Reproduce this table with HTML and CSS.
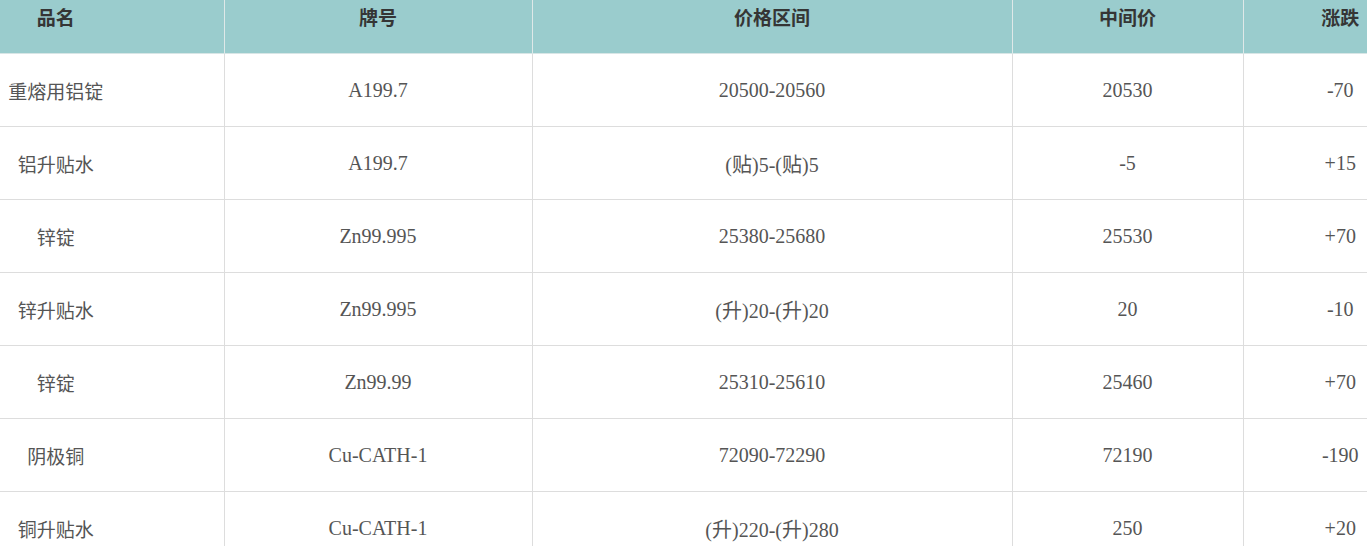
FILE: index.html
```html
<!DOCTYPE html>
<html lang="zh-CN">
<head>
<meta charset="utf-8">
<title>价格行情</title>
<link rel="stylesheet" href="styles.css">
</head>
<body>
<div class="wrap">
<table class="price-table">
  <colgroup>
    <col class="c-name">
    <col class="c-brand">
    <col class="c-range">
    <col class="c-mid">
    <col class="c-chg">
  </colgroup>
  <thead>
    <tr>
      <th class="name">品名</th>
      <th>牌号</th>
      <th>价格区间</th>
      <th>中间价</th>
      <th class="chg">涨跌</th>
    </tr>
  </thead>
  <tbody>
    <tr><td class="name">重熔用铝锭</td><td>A199.7</td><td>20500-20560</td><td>20530</td><td class="chg">-70</td></tr>
    <tr><td class="name">铝升贴水</td><td>A199.7</td><td>(贴)5-(贴)5</td><td>-5</td><td class="chg">+15</td></tr>
    <tr><td class="name">锌锭</td><td>Zn99.995</td><td>25380-25680</td><td>25530</td><td class="chg">+70</td></tr>
    <tr><td class="name">锌升贴水</td><td>Zn99.995</td><td>(升)20-(升)20</td><td>20</td><td class="chg">-10</td></tr>
    <tr><td class="name">锌锭</td><td>Zn99.99</td><td>25310-25610</td><td>25460</td><td class="chg">+70</td></tr>
    <tr><td class="name">阴极铜</td><td>Cu-CATH-1</td><td>72090-72290</td><td>72190</td><td class="chg">-190</td></tr>
    <tr><td class="name">铜升贴水</td><td>Cu-CATH-1</td><td>(升)220-(升)280</td><td>250</td><td class="chg">+20</td></tr>
  </tbody>
</table>
</div>
</body>
</html>
```

FILE: styles.css
```css
html, body {
  margin: 0;
  padding: 0;
  background: #ffffff;
}

.wrap {
  width: 1367px;
  overflow: hidden;
}

.price-table {
  border-collapse: collapse;
  table-layout: fixed;
  width: 1367px;
  font-family: "Liberation Serif", "Noto Sans CJK SC", serif;
  font-size: 20px;
  color: #555555;
}

.c-name { width: 224px; }
.c-brand { width: 308px; }
.c-range { width: 480px; }
.c-mid { width: 231px; }
.c-chg { width: 124px; }

.price-table th {
  background: #9acccd;
  color: #353535;
  font-family: "Noto Sans CJK SC", sans-serif;
  font-weight: bold;
  font-size: 19px;
  height: 53px;
  padding: 0;
  line-height: 34px;
  vertical-align: top;
  text-align: center;
  white-space: nowrap;
  border-left: 1px solid #dfe8e8;
  border-right: 1px solid #dfe8e8;
  border-bottom: 1px solid #d8e6e6;
}

.price-table td {
  height: 72px;
  padding: 0;
  text-align: center;
  vertical-align: middle;
  white-space: nowrap;
  border: 1px solid #dddddd;
  border-top: none;
}

.price-table .name {
  padding-right: 112px;
  border-left: none;
}

.price-table .chg {
  padding-left: 70px;
  border-right: none;
}

.price-table td.name {
  font-family: "Noto Sans CJK SC", sans-serif;
  font-size: 19px;
}
```
